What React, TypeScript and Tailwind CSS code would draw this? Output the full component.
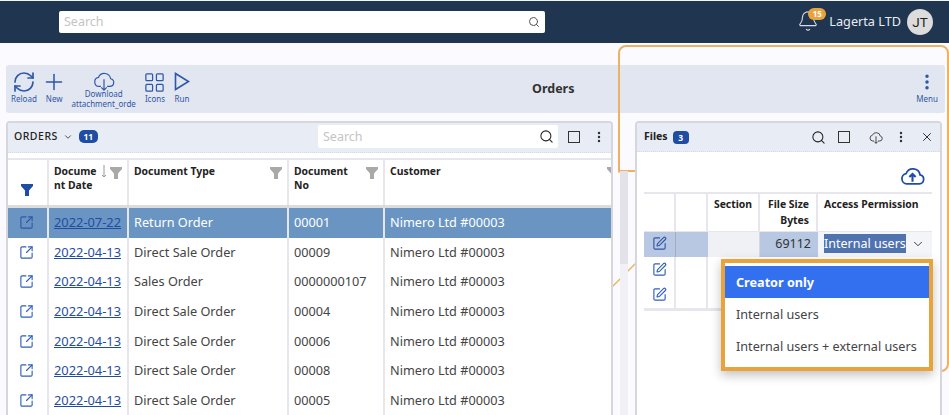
import React from 'react';
import { Bell, ChevronDown, EllipsisVertical, LayoutGrid, Plus, RefreshCw, Search, SquareArrowOutUpRight, SquarePen, X } from 'lucide-react';

const orders = [
  { date: '2022-07-22', type: 'Return Order', no: '00001' },
  { date: '2022-04-13', type: 'Direct Sale Order', no: '00009' },
  { date: '2022-04-13', type: 'Sales Order', no: '0000000107' },
  { date: '2022-04-13', type: 'Direct Sale Order', no: '00004' },
  { date: '2022-04-13', type: 'Direct Sale Order', no: '00006' },
  { date: '2022-04-13', type: 'Direct Sale Order', no: '00008' },
  { date: '2022-04-13', type: 'Direct Sale Order', no: '00005' },
];

const FilterIcon = ({ className }: { className: string }) => (
  <svg viewBox="0 0 12 12" className={className} fill="currentColor">
    <path d="M0 0h12v2L8 6.5V12H4V6.5L0 2z" />
  </svg>
);

const CLOUD = 'M6.5 17H18.5a4.3 4.3 0 0 0 .8-8.5a7 7 0 0 0-13.4-1.4A5 5 0 0 0 6.5 17z';

const CloudDownIcon = ({ className, sw }: { className: string; sw: number }) => (
  <svg viewBox="0 0 24 22" className={className} fill="none" stroke="currentColor" strokeWidth={sw}>
    <path d="M8.5 17H6.5A5 5 0 0 1 5.9 7.1a7 7 0 0 1 13.4 1.4A4.3 4.3 0 0 1 18.5 17H15.5" />
    <path d="M12 9v12M9 18l3 3 3-3" />
  </svg>
);

const CloudUpIcon = ({ className }: { className: string }) => (
  <svg viewBox="0 0 24 18" className={className} fill="none" stroke="currentColor" strokeWidth="1.7">
    <path d={CLOUD} />
    <path d="M12 15V8M9 10.5l3-3 3 3" strokeWidth="2" />
  </svg>
);

const ToolButton = ({ label, children }: { label: React.ReactNode; children: React.ReactNode }) => (
  <div className="flex flex-col items-center text-[#2f57a8] text-[8px] leading-[10px]">
    <div className="h-[24px] flex items-center justify-center">{children}</div>
    <div className="text-center">{label}</div>
  </div>
);

const Th = ({ w, children, filter }: { w: string; children?: React.ReactNode; filter?: boolean }) => (
  <div className={`${w} shrink-0 relative border-r-2 border-[#e6e6ec] px-[5px] pt-[4px] text-[10.4px] leading-[14px] font-bold text-[#222]`}>
    {children}
    {filter && <FilterIcon className="absolute right-[5px] top-[7px] w-[12px] h-[12px] text-[#a9a9a9]" />}
  </div>
);

export default function App() {
  return (
    <div className="relative w-[949px] h-[415px] overflow-hidden bg-[#fafaff] font-['Noto_Sans',sans-serif] text-[#333]">
      <div className="h-[1px] bg-[#f4f4f0]" />
      <header className="h-[42px] bg-[#203650] flex items-center">
        <div className="ml-[59px] w-[486px] h-[22px] bg-white rounded-[2px] flex items-center justify-between px-[5px]">
          <span className="text-[12.5px] text-[#c4c4c4]">Search</span>
          <Search className="w-[12px] h-[12px] text-[#555]" />
        </div>
        <div className="ml-auto flex items-center pr-[16px]">
          <div className="relative -mt-[3px] mr-[10px]">
            <Bell className="block w-[22px] h-[22px] text-[#d8dde3]" strokeWidth={1.2} />
            <span className="absolute left-[11px] top-[-2px] w-[18px] h-[12px] rounded-full bg-[#e8a33d] text-white text-[8px] leading-[12px] font-bold text-center">15</span>
          </div>
          <span className="text-[12.7px] text-[#e8edf2]">Lagerta LTD</span>
          <span className="ml-[6px] w-[26px] h-[26px] rounded-full bg-[#dcdcdc] text-[#222] text-[13.5px] font-['Roboto',sans-serif] flex items-center justify-center">JT</span>
        </div>
      </header>

      <div className="px-[6px] pt-[22px]">
        <div className="h-[48px] w-[939px] bg-[#e1e6f0] rounded-[3px] flex items-start pl-[5px] pr-[7px] pt-[5px] relative">
          <div className="flex gap-[9px]">
            <ToolButton label="Reload"><RefreshCw className="w-[24px] h-[24px]" strokeWidth={1.7} /></ToolButton>
            <ToolButton label="New"><Plus className="w-[26px] h-[26px] -mx-[5px]" strokeWidth={1.4} /></ToolButton>
            <div className="flex flex-col items-center text-[#2f57a8] text-[8px] leading-[10px] -mt-[3px]">
              <div className="h-[22px] pt-[4px]"><CloudDownIcon className="w-[22px] h-[20px]" sw={1.3} /></div>
              <div className="text-center whitespace-nowrap">Download<br />attachment_orde</div>
            </div>
            <ToolButton label="Icons"><LayoutGrid className="w-[23px] h-[23px] -mx-[2px]" strokeWidth={1.3} /></ToolButton>
            <ToolButton label="Run">
              <svg viewBox="0 0 16 19" className="w-[16px] h-[19px] -mt-[1px]" fill="none" stroke="currentColor" strokeWidth="1.6">
                <path d="M1.5 1.5L14.5 9.5L1.5 17.5Z" />
              </svg>
            </ToolButton>
          </div>
          <div className="absolute left-[526px] top-[15px] text-[12.5px] font-bold text-[#333]">Orders</div>
          <div className="ml-auto">
            <ToolButton label="Menu"><EllipsisVertical className="w-[20px] h-[20px]" strokeWidth={2.2} /></ToolButton>
          </div>
        </div>
      </div>

      {/* orange callout, sits over the toolbar and under the panels */}
      <div className="absolute left-[618px] top-[45px] w-[331px] h-[327px] border-2 border-[#eeb163] rounded-[8px] [clip-path:polygon(0_0,100%_0,100%_100%,97%_100%,97%_40%,0_39%)]" />
      <svg className="absolute left-[610px] top-[260px] w-[28px] h-[30px]" viewBox="0 0 28 30">
        <path d="M2 27 L26 3" stroke="#eeb163" strokeWidth="1.5" fill="none" />
      </svg>
      <div className="absolute left-[618px] top-[170px] w-[20px] h-[2px] bg-[#eeb163]" />

      <div className="relative flex pl-[6px] pt-[8px]">
        {/* orders panel */}
        <section className="w-[607px] h-[300px] shrink-0 overflow-hidden bg-white border-2 border-b-0 border-[#d5d6de] rounded-t-[4px]">
          <div className="h-[30px] bg-[#e8ecf5] border-b border-dotted border-[#d3d9e6] flex items-center pl-[6px] pr-[5px] pb-[2px]">
            <span className="text-[10.5px] tracking-[0.5px] font-medium text-[#222]">ORDERS</span>
            <ChevronDown className="w-[10px] h-[10px] ml-[5px] text-[#333]" />
            <span className="ml-[6px] w-[19px] h-[13px] rounded-[5px] bg-[#1f4da3] text-white text-[8.5px] font-bold leading-[13px] text-center">11</span>
            <div className="ml-auto w-[240px] h-[23px] bg-white rounded-[2px] flex items-center justify-between pl-[5px] pr-[4px]">
              <span className="text-[12.5px] text-[#c4c4c4] mt-[1px]">Search</span>
              <Search className="w-[15px] h-[15px] text-[#222]" strokeWidth={1.7} />
            </div>
            <div className="w-[12px] h-[12px] ml-[10px] border-[1.5px] border-[#333]" />
            <EllipsisVertical className="w-[14px] h-[14px] ml-[12px] text-[#333]" strokeWidth={2.2} />
          </div>
          <div className="mt-[5px] border-t-2 border-[#e6e6ec]">
            <div className="flex h-[45px]">
              <div className="w-[41px] shrink-0 border-r-2 border-[#e6e6ec] flex justify-center items-end pb-[9px] pr-[2px]">
                <FilterIcon className="w-[14px] h-[12px] text-[#1f4da3]" />
              </div>
              <Th w="w-[80px]">
                <span className="block w-[44px] break-all">Document Date</span>
                <svg viewBox="0 0 8 13" className="absolute left-[51px] top-[5px] w-[8px] h-[13px] text-[#999]" fill="none" stroke="currentColor" strokeWidth="1">
                  <path d="M4 0v12M2 10l2 2 2-2" />
                </svg>
                <FilterIcon className="absolute right-[5px] top-[7px] w-[12px] h-[12px] text-[#a9a9a9]" />
              </Th>
              <Th w="w-[160px]" filter>Document Type</Th>
              <Th w="w-[96px]" filter>Document<br />No</Th>
              <Th w="w-[228px]">
                Customer
                <FilterIcon className="absolute left-[222px] top-[7px] w-[12px] h-[12px] text-[#a9a9a9]" />
              </Th>
            </div>
            <div className="h-[3px] bg-[#dcdcdc]" />
            {orders.map((o, i) => (
              <div key={i} className={`flex h-[29.6px] items-stretch text-[12.7px] ${i === 0 ? 'bg-[#6a95c3] text-white' : 'bg-white text-[#444]'}`}>
                <div className="w-[41px] shrink-0 border-r-2 border-[#e6e6ec] flex items-center justify-center pr-[2px]">
                  <SquareArrowOutUpRight className={`w-[15px] h-[15px] ${i === 0 ? 'text-[#2f57a8]' : 'text-[#2f5fb8]'}`} strokeWidth={1.8} />
                </div>
                <div className="w-[80px] shrink-0 border-r-2 border-[#e6e6ec] flex items-center px-[5px]">
                  <span className="underline text-[#1f4da3] text-[12.85px]">{o.date}</span>
                </div>
                <div className="w-[160px] shrink-0 border-r-2 border-[#e6e6ec] flex items-center px-[5px]">{o.type}</div>
                <div className="w-[96px] shrink-0 border-r-2 border-[#e6e6ec] flex items-center px-[5px]">{o.no}</div>
                <div className="w-[228px] shrink-0 flex items-center px-[5px]">Nimero Ltd #00003</div>
              </div>
            ))}
          </div>
        </section>

        {/* scrollbar between the panels */}
        <div className="w-[8px] h-[300px] ml-[7px] mt-[50px] bg-[#f0f0f5]">
          <div className="h-[93px] bg-[#e2e2e8]" />
        </div>

        {/* files panel */}
        <section className="relative w-[307px] h-[300px] ml-[7px] shrink-0 bg-white border-2 border-b-0 border-[#d5d6de] rounded-t-[4px]">
          <div className="h-[29px] bg-[#e8ecf5] border-b border-dotted border-[#d3d9e6] flex items-center pl-[7px] pr-[6px]">
            <span className="text-[10.5px] font-bold text-[#222]">Files</span>
            <span className="ml-[5px] w-[16px] h-[13px] rounded-[4px] bg-[#1f4da3] text-white text-[8.5px] font-bold leading-[13px] text-center">3</span>
            <Search className="w-[15px] h-[15px] ml-auto text-[#222]" strokeWidth={1.7} />
            <div className="w-[12px] h-[12px] ml-[12px] border-[1.5px] border-[#333]" />
            <CloudDownIcon className="w-[14px] h-[13px] ml-[19px] text-[#333]" sw={1.5} />
            <EllipsisVertical className="w-[14px] h-[14px] ml-[11px] text-[#333]" strokeWidth={2.2} />
            <X className="w-[14px] h-[14px] ml-[12px] text-[#333]" strokeWidth={1.7} />
          </div>
          <div className="h-[40px] flex justify-end items-center pr-[15px] pt-[7px]">
            <CloudUpIcon className="w-[25px] h-[19px] text-[#1f4da3]" />
          </div>
          <div className="ml-[7px] w-[288px]">
            <div className="flex h-[39px] border-t-2 border-[#e6e6ec] text-[10.4px] leading-[16px] font-bold text-[#222]">
              <div className="w-[32px] border-r-2 border-[#e6e6ec]" />
              <div className="w-[32px] border-r-2 border-[#e6e6ec]" />
              <div className="w-[52px] border-r-2 border-[#e6e6ec] text-center pt-[2px]">Section</div>
              <div className="w-[58px] border-r-2 border-[#e6e6ec] text-right pr-[7px] pt-[2px]">File Size<br />Bytes</div>
              <div className="w-[114px] pl-[6px] pt-[2px] whitespace-nowrap">Access Permission</div>
            </div>
            <div className="flex h-[26px] items-stretch text-[12.5px] border-t border-[#e6e6ec]">
              <div className="w-[32px] bg-[#b8c7e2] border-r border-[#aab] flex items-center justify-center pb-[2px]">
                <SquarePen className="w-[15px] h-[15px] text-[#2f57a8]" strokeWidth={1.8} />
              </div>
              <div className="w-[32px] bg-[#b8c7e2]" />
              <div className="w-[52px] bg-[#f0f1f5] border-r border-[#d5d6de]" />
              <div className="w-[58px] bg-[#b8c7e2] text-right pr-[7px] leading-[23px] text-[#333]">69112</div>
              <div className="w-[114px] bg-[#f4f5f8] flex items-center pl-[6px] pb-[2px]">
                <span className="bg-[#5073b0] text-white leading-[19px]">Internal users</span>
                <ChevronDown className="w-[14px] h-[14px] ml-[5px] text-[#333]" strokeWidth={1.6} />
              </div>
            </div>
            {[0, 1].map((r) => (
              <div key={r} className="flex h-[25.5px]">
                <div className="w-[32px] border-r-2 border-[#e6e6ec] flex items-center justify-center pb-[1px]">
                  <SquarePen className="w-[15px] h-[15px] text-[#2f5fb8]" strokeWidth={1.8} />
                </div>
                <div className="w-[32px] border-r-2 border-[#e6e6ec]" />
              </div>
            ))}
            <div className="h-[3px] bg-[#e6e6ec]" />
          </div>

          {/* access permission dropdown */}
          <div className="absolute left-[84px] top-[136px] w-[212px] h-[112px] bg-white border-4 border-[#e8a33d] pt-[3px] text-[12.65px] text-[#444] shadow-[0_4px_10px_rgba(0,0,0,0.25)]">
            <div className="h-[32px] bg-[#3370f0] text-white font-bold pl-[11px] leading-[32px]">Creator only</div>
            <div className="h-[32px] pl-[11px] leading-[32px]">Internal users</div>
            <div className="h-[32px] pl-[11px] leading-[32px] whitespace-nowrap">Internal users + external users</div>
          </div>
        </section>
      </div>
    </div>
  );
}
